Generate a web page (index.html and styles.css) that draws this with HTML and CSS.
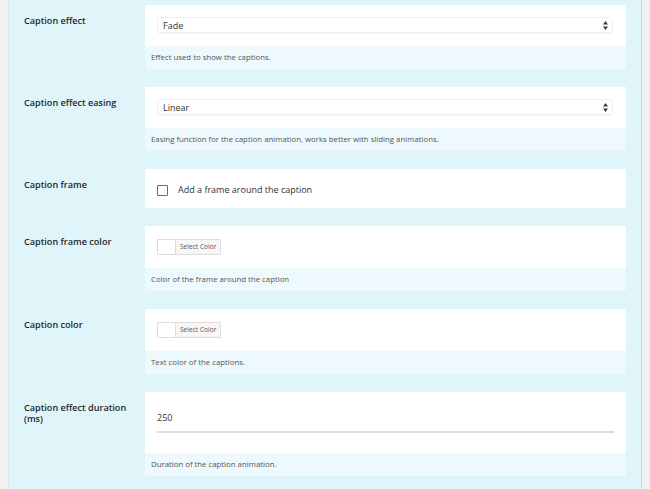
FILE: index.html
```html
<!DOCTYPE html>
<html>
<head>
<meta charset="utf-8">
<link rel="stylesheet" href="styles.css">
</head>
<body>
<div class="panel">
  <div class="row">
    <div class="label">Caption effect</div>
    <div class="card">
      <div class="field field-select">
        <div class="select"><span>Fade</span>
          <svg class="arrows" width="5" height="9" viewBox="0 0 5 9"><path d="M2.5 0 L5 3.6 L0 3.6 Z M2.5 9 L5 5.4 L0 5.4 Z" fill="#3a3a3a"/></svg>
        </div>
      </div>
      <div class="desc">Effect used to show the captions.</div>
    </div>
  </div>
  <div class="row">
    <div class="label">Caption effect easing</div>
    <div class="card">
      <div class="field field-select">
        <div class="select"><span>Linear</span>
          <svg class="arrows" width="5" height="9" viewBox="0 0 5 9"><path d="M2.5 0 L5 3.6 L0 3.6 Z M2.5 9 L5 5.4 L0 5.4 Z" fill="#3a3a3a"/></svg>
        </div>
      </div>
      <div class="desc">Easing function for the caption animation, works better with sliding animations.</div>
    </div>
  </div>
  <div class="row">
    <div class="label">Caption frame</div>
    <div class="card card-single">
      <div class="field field-check">
        <span class="checkbox"></span>
        <span class="check-label">Add a frame around the caption</span>
      </div>
    </div>
  </div>
  <div class="row">
    <div class="label">Caption frame color</div>
    <div class="card">
      <div class="field field-color">
        <div class="picker"><span class="swatch"></span><span class="pick-btn">Select Color</span></div>
      </div>
      <div class="desc">Color of the frame around the caption</div>
    </div>
  </div>
  <div class="row">
    <div class="label">Caption color</div>
    <div class="card">
      <div class="field field-color">
        <div class="picker"><span class="swatch"></span><span class="pick-btn">Select Color</span></div>
      </div>
      <div class="desc">Text color of the captions.</div>
    </div>
  </div>
  <div class="row">
    <div class="label">Caption effect duration (ms)</div>
    <div class="card">
      <div class="field field-input">
        <div class="input">250</div>
      </div>
      <div class="desc">Duration of the caption animation.</div>
    </div>
  </div>
</div>
</body>
</html>
```
FILE: styles.css
```css
html, body {
  margin: 0;
  padding: 0;
  height: 100%;
}
body {
  background: #f1f1f1;
  font-family: "Open Sans", "Liberation Sans", sans-serif;
  color: #23282d;
  overflow: hidden;
}
.panel {
  margin-left: 8px;
  width: 617px;
  min-height: 100%;
  border-left: 1px solid #e3e3e3;
  border-right: 1px solid #d6d6d6;
  background: #dff5fa;
  padding: 5px 15px 0 0;
  box-sizing: content-box;
}
.row {
  display: flex;
  margin-bottom: 18px;
}
.label {
  width: 136px;
  flex: none;
  box-sizing: border-box;
  padding: 10px 10px 0 15px;
  font-size: 9.1px;
  font-weight: 600;
  line-height: 11px;
  color: #23282d;
}
.card {
  flex: 1;
  background: #fff;
  border-radius: 0 0 3px 3px;
  overflow: hidden;
}
.field {
  padding: 0 12px;
  box-sizing: border-box;
}
.field-select {
  height: 41px;
  padding-top: 12px;
}
.select {
  height: 16px;
  border: 1px solid #eeeeee;
  border-radius: 3px;
  box-shadow: 0 1px 1px rgba(0,0,0,0.03);
  box-sizing: border-box;
  display: flex;
  align-items: center;
  justify-content: space-between;
  padding: 0 4px 0 5px;
  font-size: 9px;
  color: #333;
  margin-right: 1px;
}
.arrows {
  display: block;
}
.desc {
  height: 23px;
  line-height: 23px;
  background: #edf9fc;
  padding: 0 6px;
  font-size: 7.8px;
  color: #555;
  white-space: nowrap;
}
.field-check {
  height: 39px;
  display: flex;
  align-items: center;
  padding-top: 4px;
}
.checkbox {
  width: 11px;
  height: 11px;
  border: 1.5px solid #6b6b6b;
  border-radius: 1px;
  box-sizing: border-box;
  flex: none;
}
.check-label {
  margin-left: 10px;
  font-size: 9px;
  color: #333;
  margin-top: -2px;
}
.field-color {
  height: 42px;
  padding-top: 11px;
}
.picker {
  display: inline-flex;
  height: 16px;
  border: 1px solid #dcdcdc;
  box-sizing: border-box;
  border-radius: 1px;
}
.swatch {
  width: 17px;
  background: #fff;
  border-right: 1px solid #dcdcdc;
}
.pick-btn {
  background: #f7f7f7;
  font-size: 6.6px;
  line-height: 14px;
  padding: 0 4px;
  color: #555;
}
.field-input {
  height: 61px;
  padding-top: 13px;
}
.input {
  height: 28px;
  box-sizing: border-box;
  border-bottom: 2px solid #dddddd;
  line-height: 26px;
  font-size: 9px;
  color: #333;
}
```
